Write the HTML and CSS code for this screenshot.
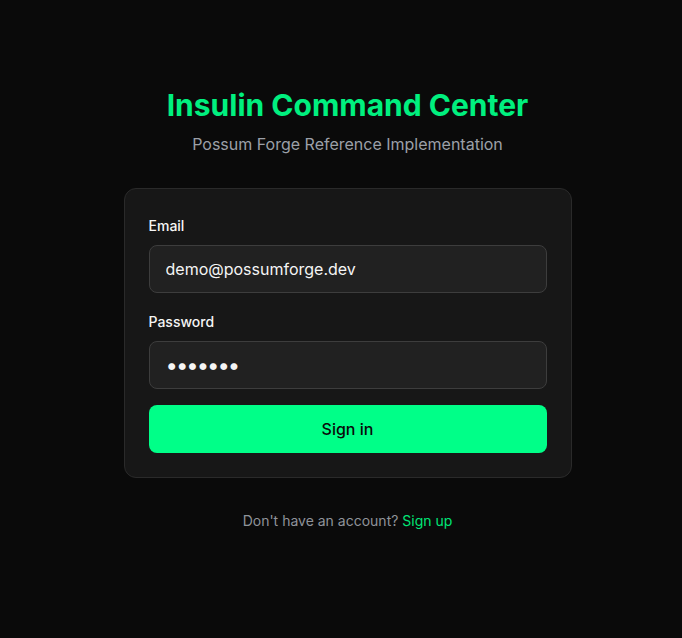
FILE: index.html
```html
<!DOCTYPE html>
<html lang="en">
<head>
<meta charset="utf-8">
<title>Insulin Command Center</title>
<link rel="stylesheet" href="styles.css">
</head>
<body>
<main class="page">
  <div class="wrap">
    <header class="head">
      <h1 class="title">Insulin Command Center</h1>
      <p class="subtitle">Possum Forge Reference Implementation</p>
    </header>
    <form class="card">
      <div class="field">
        <label class="label" for="email">Email</label>
        <input class="input" id="email" type="email" value="demo@possumforge.dev">
      </div>
      <div class="field">
        <label class="label" for="pw">Password</label>
        <input class="input pw" id="pw" type="password" value="demo123">
      </div>
      <button class="btn" type="button">Sign in</button>
    </form>
    <p class="foot">Don't have an account? <a class="link" href="#">Sign up</a></p>
  </div>
</main>
</body>
</html>
```
FILE: styles.css
```css
* { box-sizing: border-box; }
html, body { margin: 0; padding: 0; background: #0a0a0a; }
body { font-family: Inter, "Noto Sans", sans-serif; color: #fafafa; }
.page {
  min-height: 638px;
  display: flex;
  justify-content: center;
  padding: 86px 0 0 13px;
}
.wrap { width: 448px; }
.head { text-align: center; }
.title {
  margin: 0;
  font-size: 30px;
  line-height: 38px;
  font-weight: 700;
  color: #00f07f;
}
.subtitle {
  margin: 9px 0 0;
  font-size: 16px;
  line-height: 22px;
  color: #9ca0a8;
}
.card {
  margin-top: 33px;
  background: #171717;
  border: 1px solid #2a2a2a;
  border-radius: 12px;
  padding: 27px 24px 24px;
  display: flex;
  flex-direction: column;
}
.field { display: flex; flex-direction: column; margin-bottom: 19px; }
.field + .btn { margin-top: -3px; }
.label {
  font-size: 14px;
  line-height: 20px;
  font-weight: 500;
  color: #f5f5f5;
  margin-bottom: 9px;
}
.input {
  height: 48px;
  border: 1px solid #3d3d3d;
  border-radius: 8px;
  background: #212121;
  color: #f5f5f5;
  font-family: Inter, "Noto Sans", sans-serif;
  font-size: 16px;
  padding: 0 16px;
  outline: none;
}
.pw { font-size: 22px; letter-spacing: -2px; }
.btn {
  height: 48px;
  border: none;
  border-radius: 8px;
  background: #00ff88;
  color: #0a0a0a;
  font-family: Inter, "Noto Sans", sans-serif;
  font-size: 16px;
  font-weight: 500;
}
.foot {
  margin: 33px 0 0;
  text-align: center;
  font-size: 14px;
  line-height: 20px;
  color: #8f939a;
}
.link { color: #00e676; text-decoration: none; }
```
